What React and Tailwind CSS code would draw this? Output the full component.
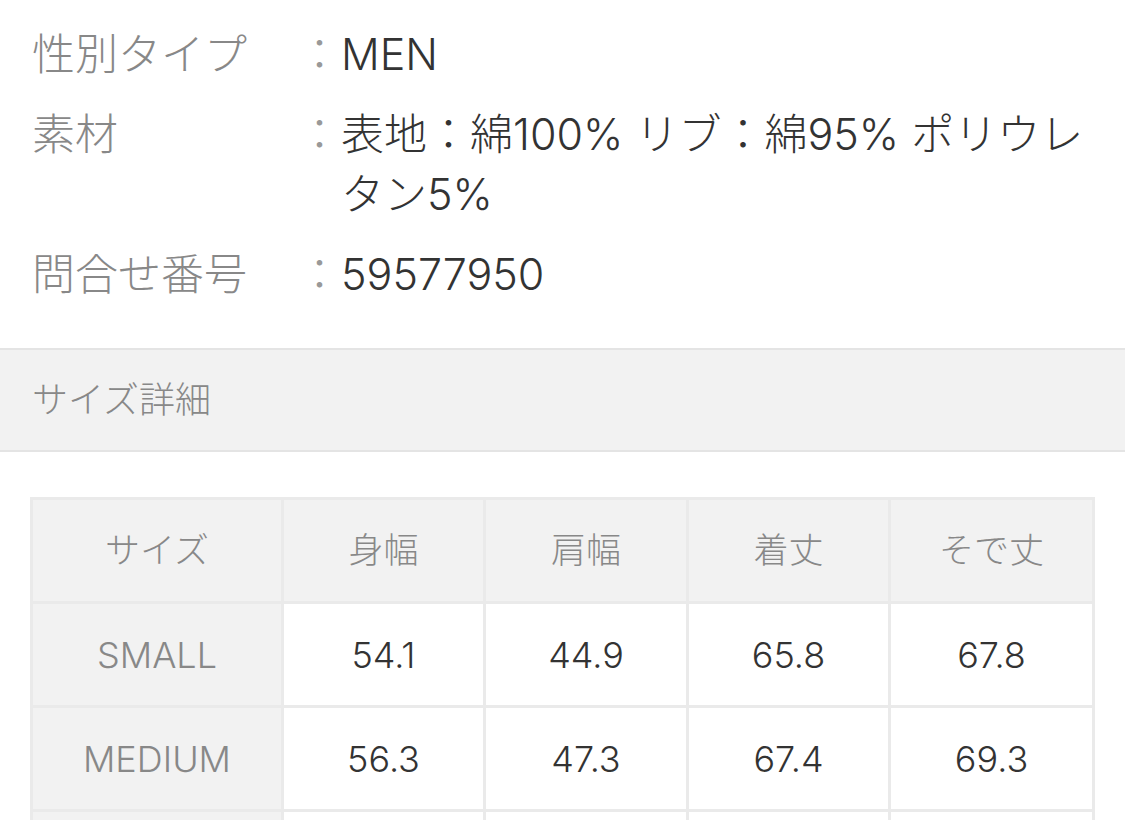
import React from 'react';

const specs = [
  { label: '性別タイプ', value: 'MEN' },
  { label: '素材', value: '表地：綿100% リブ：綿95% ポリウレタン5%' },
  { label: '問合せ番号', value: '59577950' },
];

const headers = ['サイズ', '身幅', '肩幅', '着丈', 'そで丈'];

const sizes = [
  { name: 'SMALL', values: ['54.1', '44.9', '65.8', '67.8'] },
  { name: 'MEDIUM', values: ['56.3', '47.3', '67.4', '69.3'] },
];

export default function App() {
  return (
    <div className="min-h-screen bg-white font-light font-['Inter','Noto_Sans_CJK_JP',sans-serif]">
      {/* spec list */}
      <dl className="pt-6 pl-8 pr-8 flex flex-col gap-5">
        {specs.map((s) => (
          <div key={s.label} className="grid grid-cols-[266px_43px_1fr] text-[43px] leading-[60px]">
            <dt className="text-[#888]">{s.label}</dt>
            <span className="text-[#999]">：</span>
            <dd className="text-[#333]">{s.value}</dd>
          </div>
        ))}
      </dl>

      {/* section header */}
      <div className="mt-11 h-[104px] flex items-center px-8 bg-[#f2f2f2] border-y-2 border-[#e4e4e4] text-[36px] text-[#888]">
        サイズ詳細
      </div>

      {/* size table */}
      <div className="pt-[45px] pl-[30px]">
        <table className="border-collapse table-fixed w-[1062px]">
          <colgroup>
            <col className="w-[251px]" />
            <col className="w-[202px]" />
            <col className="w-[203px]" />
            <col className="w-[202px]" />
            <col className="w-[204px]" />
          </colgroup>
          <thead>
            <tr>
              {headers.map((h) => (
                <th key={h} className="h-[104px] p-0 border-[3px] border-[#eaeaea] bg-[#f2f2f2] text-[35px] font-light text-[#888] text-center">
                  {h}
                </th>
              ))}
            </tr>
          </thead>
          <tbody>
            {sizes.map((r) => (
              <tr key={r.name}>
                <td className="h-[104px] p-0 border-[3px] border-[#eaeaea] bg-[#f2f2f2] text-[36px] text-[#888] text-center">{r.name}</td>
                {r.values.map((v, i) => (
                  <td key={i} className="h-[104px] p-0 border-[3px] border-[#eaeaea] bg-white text-[36px] text-[#333] text-center">
                    {v}
                  </td>
                ))}
              </tr>
            ))}
            {/* next row, scrolled past the fold */}
            <tr>
              <td className="h-[104px] p-0 border-[3px] border-[#eaeaea] bg-[#f2f2f2]" />
              {[0, 1, 2, 3].map((i) => (
                <td key={i} className="h-[104px] p-0 border-[3px] border-[#eaeaea] bg-white" />
              ))}
            </tr>
          </tbody>
        </table>
      </div>
    </div>
  );
}
